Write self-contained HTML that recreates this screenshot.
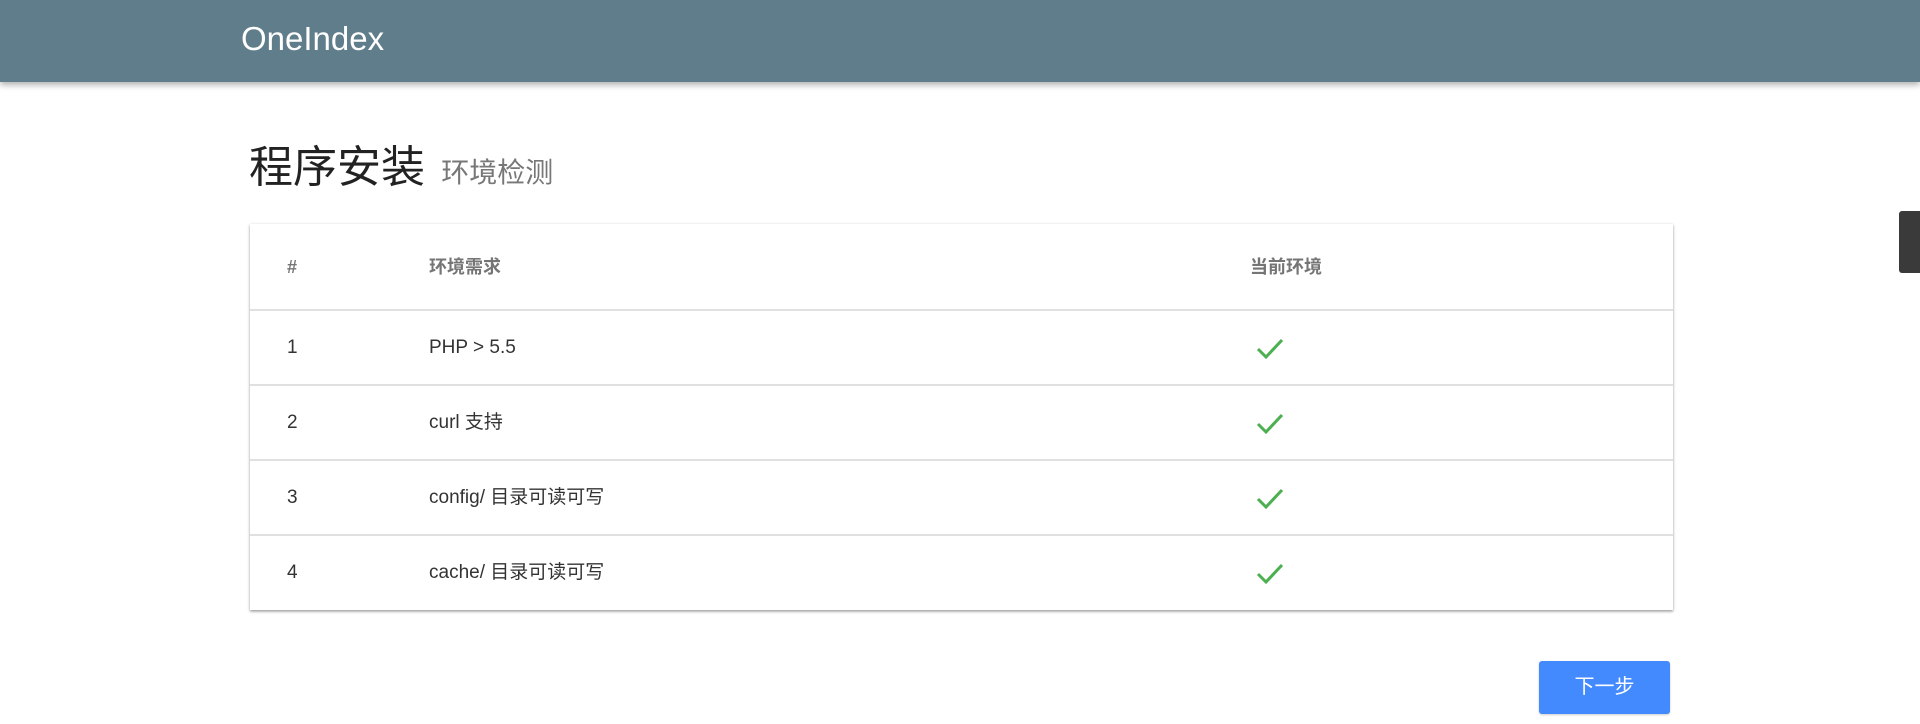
<!DOCTYPE html>
<html><head><meta charset="utf-8"><style>
html,body{margin:0;padding:0;width:1920px;height:724px;overflow:hidden;background:#fff;font-family:"Liberation Sans","Noto Sans CJK SC",sans-serif;}
.bar{position:absolute;left:0;top:0;width:1920px;height:82px;background:#607d8b;box-shadow:0 3px 6px rgba(0,0,0,.3);}
.bar span{position:absolute;left:241px;top:19px;font-size:33px;color:#fff;line-height:40px;}
.title{position:absolute;left:249px;top:140px;font-size:44px;color:#222;line-height:56px;white-space:nowrap;}
.title small{font-size:28px;color:#777;margin-left:4px;}
.card{position:absolute;left:250px;top:224px;width:1423px;height:386px;background:#fff;box-shadow:0 1px 3px rgba(0,0,0,.3),0 2px 2px rgba(0,0,0,.15);}
.row{position:absolute;left:0;width:1423px;height:74px;border-top:2px solid #e0e0e0;}
.c{position:absolute;top:0;height:74px;line-height:74px;font-size:19px;color:#333;white-space:nowrap;}
.h{font-weight:bold;color:#757575;font-size:18px;height:86px;line-height:86px;}
.chk{position:absolute;left:1005px;top:25px;}
.btn{position:absolute;left:1539px;top:661px;width:131px;height:53px;background:#448aff;border-radius:3px;color:#fff;font-size:20px;line-height:53px;text-align:center;box-shadow:0 1px 2px rgba(0,0,0,.2);}
.wid{position:absolute;left:1899px;top:211px;width:21px;height:62px;background:#3a3a3a;border-radius:3px 0 0 3px;}
</style></head><body>
<div class="bar"><span>OneIndex</span></div>
<div class="title">程序安装 <small>环境检测</small></div>
<div class="card">
 <div class="c h" style="left:37px">#</div>
 <div class="c h" style="left:179px">环境需求</div>
 <div class="c h" style="left:1000px">当前环境</div>
 <div class="row" style="top:85px">
  <div class="c" style="left:37px">1</div><div class="c" style="left:179px">PHP &gt; 5.5</div>
  <svg class="chk" width="30" height="26" viewBox="0 0 30 26"><path d="M3 13 L11 21 L27 4" fill="none" stroke="#4caf50" stroke-width="3"/></svg>
 </div>
 <div class="row" style="top:160px">
  <div class="c" style="left:37px">2</div><div class="c" style="left:179px">curl 支持</div>
  <svg class="chk" width="30" height="26" viewBox="0 0 30 26"><path d="M3 13 L11 21 L27 4" fill="none" stroke="#4caf50" stroke-width="3"/></svg>
 </div>
 <div class="row" style="top:235px">
  <div class="c" style="left:37px">3</div><div class="c" style="left:179px">config/ 目录可读可写</div>
  <svg class="chk" width="30" height="26" viewBox="0 0 30 26"><path d="M3 13 L11 21 L27 4" fill="none" stroke="#4caf50" stroke-width="3"/></svg>
 </div>
 <div class="row" style="top:310px">
  <div class="c" style="left:37px">4</div><div class="c" style="left:179px">cache/ 目录可读可写</div>
  <svg class="chk" width="30" height="26" viewBox="0 0 30 26"><path d="M3 13 L11 21 L27 4" fill="none" stroke="#4caf50" stroke-width="3"/></svg>
 </div>
</div>
<div class="btn">下一步</div>
<div class="wid"></div>
</body></html>
